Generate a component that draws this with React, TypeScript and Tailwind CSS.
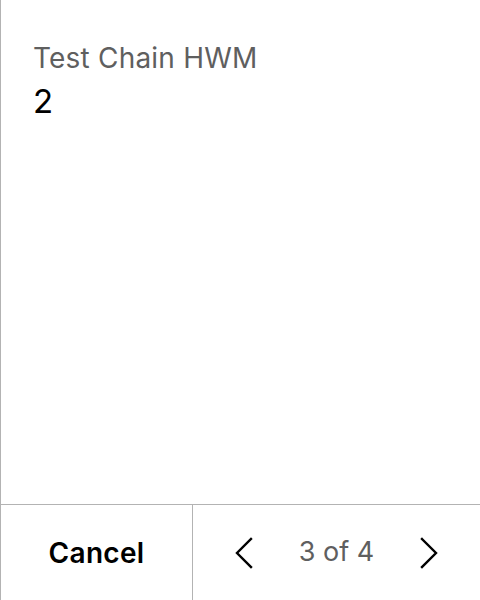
import React from 'react'

const Chevron: React.FC<{ dir: 'left' | 'right' }> = ({ dir }) => (
    <svg width="18" height="32" viewBox="0 0 18 32" fill="none" stroke="#000" strokeWidth="2.4" strokeLinecap="square" strokeLinejoin="miter">
        {dir === 'left'
            ? <polyline points="16,2 2,16 16,30" />
            : <polyline points="2,2 16,16 2,30" />}
    </svg>
)

const App: React.FC = () => {
    return (
        <div className="h-[600px] w-[480px] flex flex-col bg-white border-l border-[#b3b3b3] font-['Inter',sans-serif]">
            {/* field */}
            <div className="flex-1 pl-8 pt-[38px]">
                <div className="text-[28px] leading-[40px] tracking-[0.2px] text-[#5f5f5f]">Test Chain HWM</div>
                <div className="text-[33px] leading-[40px] mt-[3px] text-black">2</div>
            </div>

            {/* footer */}
            <div className="h-[96px] flex border-t border-[#b3b3b3]">
                <button className="w-[192px] border-r border-[#b3b3b3] flex items-center justify-center text-[28px] font-semibold tracking-[0.3px] text-black">
                    Cancel
                </button>
                <div className="flex-1 flex items-center justify-between px-[42px]">
                    <Chevron dir="left" />
                    <span className="text-[27px] text-[#5f5f5f]">3 of 4</span>
                    <Chevron dir="right" />
                </div>
            </div>
        </div>
    )
}

export default App
